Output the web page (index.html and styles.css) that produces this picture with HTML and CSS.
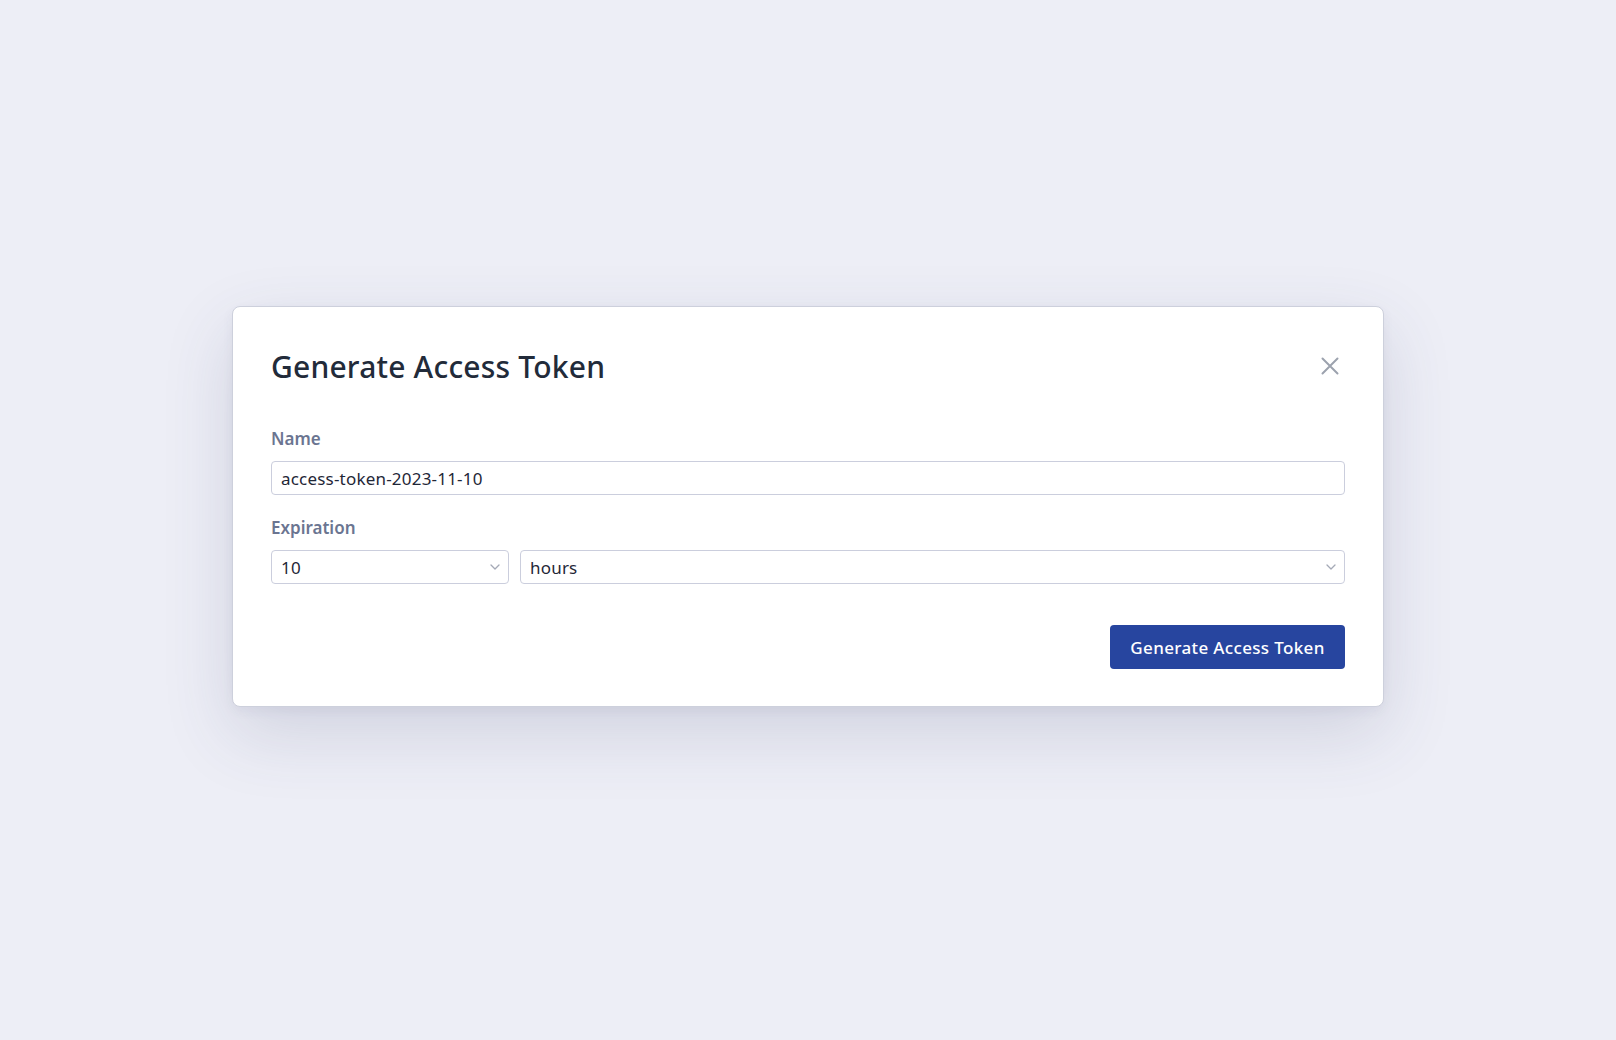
FILE: index.html
```html
<!DOCTYPE html>
<html lang="en">
<head>
<meta charset="utf-8">
<title>Generate Access Token</title>
<link rel="stylesheet" href="styles.css">
</head>
<body>
<div class="modal">
  <div class="modal-header">
    <h2 class="modal-title">Generate Access Token</h2>
    <button class="close-btn" aria-label="Close">
      <svg width="18" height="18" viewBox="0 0 18 18"><path d="M1.5 1.5 L16.5 16.5 M16.5 1.5 L1.5 16.5" stroke="currentColor" stroke-width="2" stroke-linecap="round" fill="none"/></svg>
    </button>
  </div>
  <div class="field">
    <label class="label">Name</label>
    <input class="text-input" type="text" value="access-token-2023-11-10">
  </div>
  <div class="field">
    <label class="label">Expiration</label>
    <div class="select-row">
      <div class="select-wrap small">
        <select class="select"><option>10</option></select>
        <svg class="chev" width="10" height="6" viewBox="0 0 10 6"><path d="M1 1 L5 5 L9 1" stroke="currentColor" stroke-width="1.3" fill="none" stroke-linecap="round" stroke-linejoin="round"/></svg>
      </div>
      <div class="select-wrap grow">
        <select class="select"><option>hours</option></select>
        <svg class="chev" width="10" height="6" viewBox="0 0 10 6"><path d="M1 1 L5 5 L9 1" stroke="currentColor" stroke-width="1.3" fill="none" stroke-linecap="round" stroke-linejoin="round"/></svg>
      </div>
    </div>
  </div>
  <div class="actions">
    <button class="primary-btn">Generate Access Token</button>
  </div>
</div>
</body>
</html>
```
FILE: styles.css
```css
* { box-sizing: border-box; }
html, body { margin: 0; padding: 0; }
body {
  background: #edeef6;
  font-family: "Noto Sans", "Open Sans", sans-serif;
  width: 1616px;
  height: 1040px;
  overflow: hidden;
}
.modal {
  width: 1152px;
  margin: 306px auto 0;
  background: #ffffff;
  border: 1px solid #cdd0dc;
  border-radius: 8px;
  padding: 40px 38px 37px;
  box-shadow: 0 26px 70px rgba(60, 66, 110, 0.16), 0 4px 12px rgba(60, 66, 110, 0.06);
}
.modal-header {
  display: flex;
  justify-content: space-between;
  align-items: center;
  margin-bottom: 40px;
}
.modal-title {
  margin: 0;
  font-size: 30px;
  line-height: 40px;
  font-weight: 500;
  letter-spacing: 0.2px;
  color: #222b3a;
}
.close-btn {
  border: 0;
  background: none;
  padding: 0;
  margin-right: 6px;
  margin-bottom: 2px;
  color: #9ca2ae;
  display: flex;
  cursor: pointer;
}
.field { display: flex; flex-direction: column; }
.field + .field { margin-top: 21px; }
.label {
  font-size: 17px;
  line-height: 24px;
  font-weight: 600;
  color: #6b7591;
  margin-bottom: 10px;
}
.text-input, .select {
  height: 34px;
  border: 1px solid #cbcedd;
  border-radius: 4px;
  font-family: inherit;
  font-size: 17px;
  letter-spacing: 0.2px;
  color: #1f2737;
  padding: 0 9px;
  background: #fff;
  outline: none;
  width: 100%;
}
.select {
  appearance: none;
  -webkit-appearance: none;
}
.select-row { display: flex; gap: 11px; }
.select-wrap { position: relative; }
.select-wrap.small { width: 238px; flex: none; }
.select-wrap.grow { flex: 1; }
.chev {
  position: absolute;
  right: 9px;
  top: 14px;
  color: #a4a9b6;
  pointer-events: none;
}
.actions {
  display: flex;
  justify-content: flex-end;
  margin-top: 41px;
}
.primary-btn {
  width: 235px;
  height: 44px;
  border: 0;
  border-radius: 4px;
  background: #27459f;
  color: #ffffff;
  font-family: inherit;
  font-size: 17px;
  font-weight: 500;
  letter-spacing: 0.35px;
  cursor: pointer;
}
```
